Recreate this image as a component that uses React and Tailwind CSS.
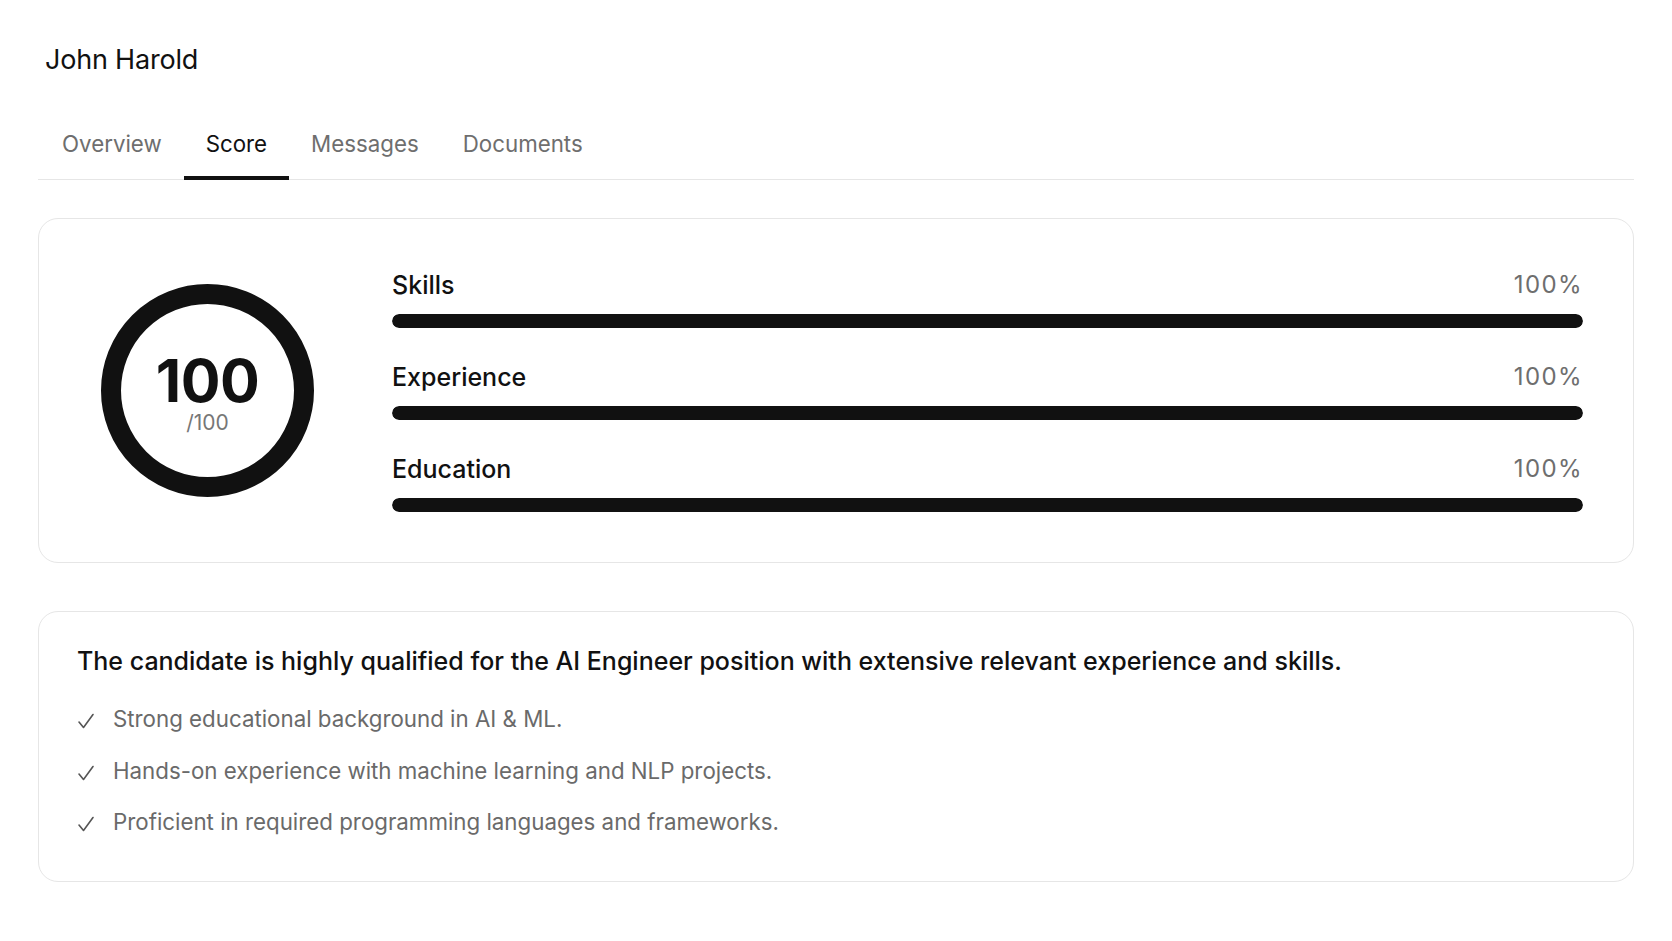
import { useState } from 'react'

const tabs = ['Overview', 'Score', 'Messages', 'Documents']

const scores = [
  { label: 'Skills', value: 100 },
  { label: 'Experience', value: 100 },
  { label: 'Education', value: 100 },
]

const highlights = [
  'Strong educational background in AI & ML.',
  'Hands-on experience with machine learning and NLP projects.',
  'Proficient in required programming languages and frameworks.',
]

function Check() {
  return (
    <svg width="18" height="16" viewBox="0 0 18 16" fill="none" className="shrink-0 mt-[9px]">
      <path d="M2 9 L6.5 14.5 L16 1.5" stroke="#555" strokeWidth="1.6" strokeLinecap="round" strokeLinejoin="round" />
    </svg>
  )
}

export default function App() {
  const [active, setActive] = useState('Score')

  return (
    <div className="min-h-screen bg-white px-[38px] pt-[44px] text-[#111]" style={{ fontFamily: "Inter, 'Noto Sans', sans-serif" }}>
      <h1 className="pl-[7px] text-[27px] leading-[32px] font-normal tracking-[-0.2px]">John Harold</h1>

      {/* Tabs */}
      <div className="mt-[34px] flex border-b border-[#e6e6e6]">
        {tabs.map(t => (
          <button
            key={t}
            onClick={() => setActive(t)}
            className={`relative px-[22px] pt-[20px] pb-[21px] text-[22.3px] leading-[28px] first:pl-[24px] ${active === t ? 'text-[#111]' : 'text-[#6e6e6e]'}`}
          >
            {t}
            {active === t && <span className="absolute left-0 right-0 bottom-[-1px] h-[4px] bg-[#111]" />}
          </button>
        ))}
      </div>

      {/* Score card */}
      <div className="mt-[38px] h-[345px] rounded-[20px] border border-[#e6e6e6] flex items-center pl-[62px] pr-[50px]">
        <div className="w-[213px] h-[213px] shrink-0 rounded-full border-[20px] border-[#111] flex flex-col items-center justify-center">
          <div className="mt-[6px] flex flex-col items-center">
            <span className="text-[59px] leading-[58px] font-bold tracking-[-0.5px]">100</span>
            <span className="text-[21px] leading-[26px] text-[#777]">/100</span>
          </div>
        </div>

        <div className="ml-[78px] flex-1 flex flex-col gap-[34px]">
          {scores.map(s => (
            <div key={s.label}>
              <div className="flex justify-between items-center leading-[30px]">
                <span className="text-[25px] font-medium">{s.label}</span>
                <span className="text-[24px] text-[#6e6e6e] tracking-[1.4px]">{s.value}%</span>
              </div>
              <div className="mt-[14px] h-[14px] rounded-full bg-[#eee] overflow-hidden">
                <div className="h-full rounded-full bg-[#111]" style={{ width: `${s.value}%` }} />
              </div>
            </div>
          ))}
        </div>
      </div>

      {/* Summary card */}
      <div className="mt-[48px] rounded-[20px] border border-[#e6e6e6] pl-[38px] pr-[38px] pt-[34px] pb-[44px]">
        <p className="text-[25px] leading-[30px] font-medium">
          The candidate is highly qualified for the AI Engineer position with extensive relevant experience and skills.
        </p>
        <ul className="mt-[28px] flex flex-col gap-[21.5px]">
          {highlights.map(h => (
            <li key={h} className="flex items-start gap-[18px] text-[22.3px] leading-[30px] text-[#6a6a6a]">
              <Check />
              <span>{h}</span>
            </li>
          ))}
        </ul>
      </div>
    </div>
  )
}
